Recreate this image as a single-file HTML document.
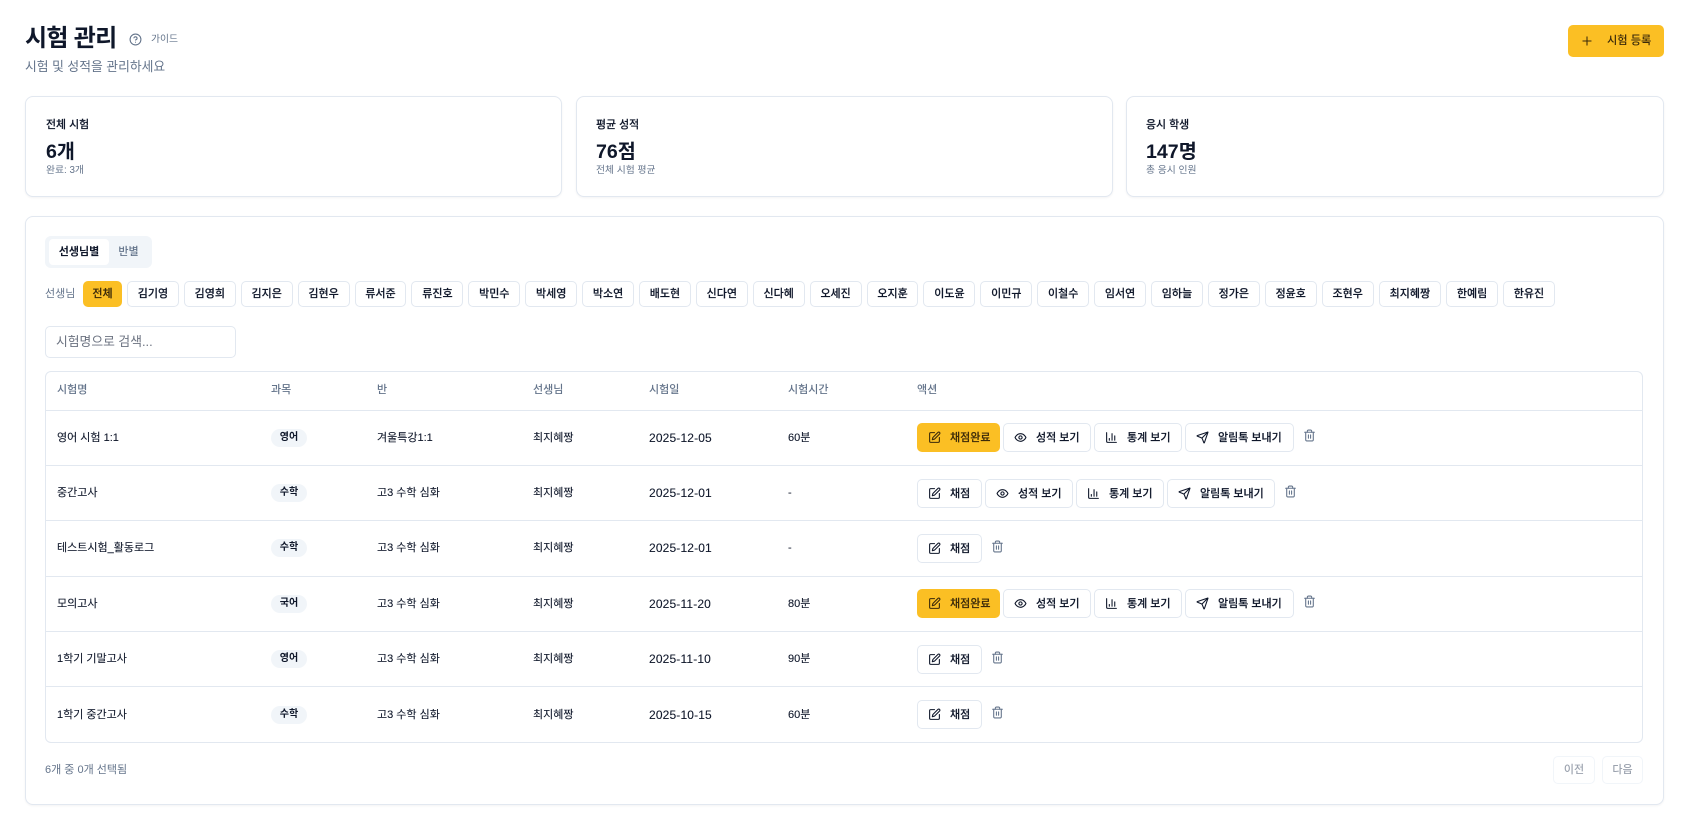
<!DOCTYPE html>
<html lang="ko">
<head>
<meta charset="utf-8">
<title>시험 관리</title>
<style>
*{box-sizing:border-box;margin:0;padding:0}
html,body{width:1692px;height:821px;overflow:hidden;background:#fff}
body{position:relative;font-family:"Liberation Sans","Noto Sans CJK KR",sans-serif;color:#0f172a;font-size:11px}
.a{position:absolute;white-space:nowrap}
.card{position:absolute;background:#fff;border:1px solid #e2e8f0;border-radius:8px;box-shadow:0 1px 2px rgba(15,23,42,.05)}
.lab{font-size:10.9px;font-weight:500;line-height:16px;color:#0f172a;-webkit-text-stroke:.15px currentColor}
.val{font-size:19.6px;font-weight:700;line-height:28px;color:#0f172a}
.sub{font-size:9.8px;line-height:14px;color:#64748b}
.chips{position:absolute;left:83px;top:281px;display:flex;gap:5px}
.chip{height:26px;width:51.9px;border:1px solid #e2e8f0;border-radius:5px;background:#fff;font-size:11px;font-weight:500;line-height:24px;text-align:center;color:#0f172a;white-space:nowrap;-webkit-text-stroke:.15px currentColor}
.chip.on{width:39px;background:#fbbf24;border-color:#fbbf24;color:#3b2a0a}
.chip.w{width:62.5px}
.th{position:absolute;top:381px;line-height:18px;font-size:11px;font-weight:500;color:#64748b;white-space:nowrap}
.line{position:absolute;left:46px;width:1596px;height:1px;background:#e2e8f0}
.td{position:absolute;font-size:11px;line-height:18px;color:#0f172a;white-space:nowrap;-webkit-text-stroke:.1px currentColor}
.d{font-size:12px;letter-spacing:.15px;margin-top:-.5px}
.pill{position:absolute;left:271px;width:36px;height:18px;border-radius:9px;background:#f1f5f9;font-size:10px;font-weight:700;line-height:18px;text-align:center;color:#0f172a}
.acts{position:absolute;left:917px;display:flex;gap:3px;align-items:flex-start}
.btn{height:29px;border:1px solid #e2e8f0;border-radius:5px;background:#fff;display:flex;align-items:center;padding-left:9.5px;gap:9.5px;font-size:11px;font-weight:500;color:#0f172a;white-space:nowrap;-webkit-text-stroke:.15px currentColor}
.btn span{position:relative;top:-1px}
.btn.y{background:#fbbf24;border-color:#fbbf24;color:#3b2a0a}
.btn svg{flex:none;-webkit-text-stroke:0}
.tr{margin-left:6px;margin-top:5.5px;color:#64748b}
svg{display:block;fill:none;stroke:currentColor;stroke-width:2;stroke-linecap:round;stroke-linejoin:round}
.s{position:absolute;border-radius:5px;border:1px solid #f1f5f9;height:28px;top:756px;font-size:11px;font-weight:500;line-height:26px;text-align:center;color:#9ca3af}
</style>
</head>
<body>
<svg width="0" height="0" style="position:absolute">
<symbol id="pen" viewBox="0 0 24 24"><path d="M12 3H5a2 2 0 0 0-2 2v14a2 2 0 0 0 2 2h14a2 2 0 0 0 2-2v-7"/><path d="M18.375 2.625a2.121 2.121 0 1 1 3 3L12 15l-4 1 1-4Z"/></symbol>
<symbol id="eye" viewBox="0 0 24 24"><path d="M2 12s3-7 10-7 10 7 10 7-3 7-10 7-10-7-10-7Z"/><circle cx="12" cy="12" r="3"/></symbol>
<symbol id="chart" viewBox="0 0 24 24"><path d="M3 3v16a2 2 0 0 0 2 2h16"/><path d="M18 17V9"/><path d="M13 17V5"/><path d="M8 17v-3"/></symbol>
<symbol id="send" viewBox="0 0 24 24"><path d="M14.536 21.686a.5.5 0 0 0 .937-.024l6.5-19a.496.496 0 0 0-.635-.635l-19 6.5a.5.5 0 0 0-.024.937l7.93 3.18a2 2 0 0 1 1.112 1.11z"/><path d="m21.854 2.147-10.94 10.939"/></symbol>
<symbol id="trash" viewBox="0 0 24 24"><path d="M3 6h18"/><path d="M19 6v14c0 1-1 2-2 2H7c-1 0-2-1-2-2V6"/><path d="M8 6V4c0-1 1-2 2-2h4c1 0 2 1 2 2v2"/><path d="M10 11v6"/><path d="M14 11v6"/></symbol>
</svg>

<div class="a" style="left:25px;top:21px;font-size:24px;font-weight:700;line-height:36px;letter-spacing:-.7px;color:#0f172a">시험 관리</div>
<svg class="a" style="left:129px;top:33px;color:#64748b;stroke-width:2" width="13" height="13" viewBox="0 0 24 24"><circle cx="12" cy="12" r="10"/><path d="M9.09 9a3 3 0 0 1 5.83 1c0 2-3 3-3 3"/><path d="M12 17h.01"/></svg>
<div class="a" style="left:151px;top:33px;font-size:9.8px;line-height:14px;color:#64748b">가이드</div>
<div class="a" style="left:25px;top:57px;font-size:12.8px;line-height:20px;color:#64748b">시험 및 성적을 관리하세요</div>

<div class="a" style="left:1568px;top:25px;width:96px;height:32px;border-radius:5px;background:#fbbf24"></div>
<svg class="a" style="left:1580px;top:34px;color:#3b2a0a;stroke-width:1.8" width="14" height="14" viewBox="0 0 24 24"><path d="M5 12h14"/><path d="M12 5v14"/></svg>
<div class="a" style="left:1607px;top:31.5px;font-size:11.2px;font-weight:500;line-height:18px;color:#3b2a0a">시험 등록</div>

<div class="card" style="left:25px;top:96px;width:537px;height:101px"></div>
<div class="card" style="left:576px;top:96px;width:537px;height:101px"></div>
<div class="card" style="left:1126px;top:96px;width:538px;height:101px"></div>
<div class="a lab" style="left:46px;top:117px">전체 시험</div>
<div class="a val" style="left:46px;top:138px">6개</div>
<div class="a sub" style="left:46px;top:164px">완료: 3개</div>
<div class="a lab" style="left:596px;top:117px">평균 성적</div>
<div class="a val" style="left:596px;top:138px">76점</div>
<div class="a sub" style="left:596px;top:164px">전체 시험 평균</div>
<div class="a lab" style="left:1146px;top:117px">응시 학생</div>
<div class="a val" style="left:1146px;top:138px">147명</div>
<div class="a sub" style="left:1146px;top:164px">총 응시 인원</div>

<div class="card" style="left:25px;top:216px;width:1639px;height:589px"></div>

<div class="a" style="left:45px;top:236px;width:107px;height:32px;border-radius:6px;background:#f1f5f9"></div>
<div class="a" style="left:49px;top:239px;width:60px;height:26px;border-radius:4px;background:#fff;font-size:11px;font-weight:700;line-height:26px;text-align:center;color:#0f172a">선생님별</div>
<div class="a" style="left:109px;top:239px;width:39px;height:26px;font-size:11px;font-weight:500;line-height:26px;text-align:center;color:#64748b">반별</div>

<div class="a" style="left:45px;top:285px;font-size:11px;line-height:18px;color:#64748b">선생님</div>
<div class="chips">
<div class="chip on">전체</div><div class="chip">김기영</div><div class="chip">김영희</div><div class="chip">김지은</div><div class="chip">김현우</div><div class="chip">류서준</div><div class="chip">류진호</div><div class="chip">박민수</div><div class="chip">박세영</div><div class="chip">박소연</div><div class="chip">배도현</div><div class="chip">신다연</div><div class="chip">신다혜</div><div class="chip">오세진</div><div class="chip">오지훈</div><div class="chip">이도윤</div><div class="chip">이민규</div><div class="chip">이철수</div><div class="chip">임서연</div><div class="chip">임하늘</div><div class="chip">정가은</div><div class="chip">정윤호</div><div class="chip">조현우</div><div class="chip w">최지혜짱</div><div class="chip">한예림</div><div class="chip">한유진</div>
</div>

<div class="a" style="left:45px;top:326px;width:191px;height:32px;border:1px solid #e2e8f0;border-radius:5px;background:#fff;padding-left:10px;font-size:12.8px;line-height:30px;color:#6b7280">시험명으로 검색...</div>

<div class="a" style="left:45px;top:371px;width:1598px;height:372px;border:1px solid #e2e8f0;border-radius:6px"></div>
<div class="th" style="left:57px">시험명</div>
<div class="th" style="left:271px">과목</div>
<div class="th" style="left:377px">반</div>
<div class="th" style="left:533px">선생님</div>
<div class="th" style="left:649px">시험일</div>
<div class="th" style="left:788px">시험시간</div>
<div class="th" style="left:917px">액션</div>

<div class="line" style="top:410px"></div>
<div class="line" style="top:465px"></div>
<div class="line" style="top:520px"></div>
<div class="line" style="top:576px"></div>
<div class="line" style="top:631px"></div>
<div class="line" style="top:686px"></div>

<!-- row 1 -->
<div class="td" style="left:57px;top:429px">영어 시험 1:1</div>
<div class="pill" style="top:429px">영어</div>
<div class="td" style="left:377px;top:429px">겨울특강1:1</div>
<div class="td" style="left:533px;top:429px">최지혜짱</div>
<div class="td d" style="left:649px;top:429px">2025-12-05</div>
<div class="td" style="left:788px;top:429px">60분</div>
<div class="acts" style="top:423px">
<div class="btn y" style="width:83px"><svg width="13" height="13"><use href="#pen"/></svg><span>채점완료</span></div>
<div class="btn" style="width:88px"><svg width="13" height="13"><use href="#eye"/></svg><span>성적 보기</span></div>
<div class="btn" style="width:88px"><svg width="13" height="13"><use href="#chart"/></svg><span>통계 보기</span></div>
<div class="btn" style="width:109px"><svg width="13" height="13"><use href="#send"/></svg><span>알림톡 보내기</span></div>
<svg class="tr" width="13" height="13"><use href="#trash"/></svg>
</div>

<!-- row 2 -->
<div class="td" style="left:57px;top:484px">중간고사</div>
<div class="pill" style="top:484px">수학</div>
<div class="td" style="left:377px;top:484px">고3 수학 심화</div>
<div class="td" style="left:533px;top:484px">최지혜짱</div>
<div class="td d" style="left:649px;top:484px">2025-12-01</div>
<div class="td" style="left:788px;top:484px">-</div>
<div class="acts" style="top:479px">
<div class="btn" style="width:65px"><svg width="13" height="13"><use href="#pen"/></svg><span>채점</span></div>
<div class="btn" style="width:88px"><svg width="13" height="13"><use href="#eye"/></svg><span>성적 보기</span></div>
<div class="btn" style="width:88px"><svg width="13" height="13"><use href="#chart"/></svg><span>통계 보기</span></div>
<div class="btn" style="width:108px"><svg width="13" height="13"><use href="#send"/></svg><span>알림톡 보내기</span></div>
<svg class="tr" width="13" height="13"><use href="#trash"/></svg>
</div>

<!-- row 3 -->
<div class="td" style="left:57px;top:539px">테스트시험_활동로그</div>
<div class="pill" style="top:539px">수학</div>
<div class="td" style="left:377px;top:539px">고3 수학 심화</div>
<div class="td" style="left:533px;top:539px">최지혜짱</div>
<div class="td d" style="left:649px;top:539px">2025-12-01</div>
<div class="td" style="left:788px;top:539px">-</div>
<div class="acts" style="top:534px">
<div class="btn" style="width:65px"><svg width="13" height="13"><use href="#pen"/></svg><span>채점</span></div>
<svg class="tr" width="13" height="13"><use href="#trash"/></svg>
</div>

<!-- row 4 -->
<div class="td" style="left:57px;top:595px">모의고사</div>
<div class="pill" style="top:595px">국어</div>
<div class="td" style="left:377px;top:595px">고3 수학 심화</div>
<div class="td" style="left:533px;top:595px">최지혜짱</div>
<div class="td d" style="left:649px;top:595px">2025-11-20</div>
<div class="td" style="left:788px;top:595px">80분</div>
<div class="acts" style="top:589px">
<div class="btn y" style="width:83px"><svg width="13" height="13"><use href="#pen"/></svg><span>채점완료</span></div>
<div class="btn" style="width:88px"><svg width="13" height="13"><use href="#eye"/></svg><span>성적 보기</span></div>
<div class="btn" style="width:88px"><svg width="13" height="13"><use href="#chart"/></svg><span>통계 보기</span></div>
<div class="btn" style="width:109px"><svg width="13" height="13"><use href="#send"/></svg><span>알림톡 보내기</span></div>
<svg class="tr" width="13" height="13"><use href="#trash"/></svg>
</div>

<!-- row 5 -->
<div class="td" style="left:57px;top:650px">1학기 기말고사</div>
<div class="pill" style="top:650px">영어</div>
<div class="td" style="left:377px;top:650px">고3 수학 심화</div>
<div class="td" style="left:533px;top:650px">최지혜짱</div>
<div class="td d" style="left:649px;top:650px">2025-11-10</div>
<div class="td" style="left:788px;top:650px">90분</div>
<div class="acts" style="top:645px">
<div class="btn" style="width:65px"><svg width="13" height="13"><use href="#pen"/></svg><span>채점</span></div>
<svg class="tr" width="13" height="13"><use href="#trash"/></svg>
</div>

<!-- row 6 -->
<div class="td" style="left:57px;top:706px">1학기 중간고사</div>
<div class="pill" style="top:706px">수학</div>
<div class="td" style="left:377px;top:706px">고3 수학 심화</div>
<div class="td" style="left:533px;top:706px">최지혜짱</div>
<div class="td d" style="left:649px;top:706px">2025-10-15</div>
<div class="td" style="left:788px;top:706px">60분</div>
<div class="acts" style="top:700px">
<div class="btn" style="width:65px"><svg width="13" height="13"><use href="#pen"/></svg><span>채점</span></div>
<svg class="tr" width="13" height="13"><use href="#trash"/></svg>
</div>

<div class="a" style="left:45px;top:761px;font-size:11px;line-height:18px;color:#64748b">6개 중 0개 선택됨</div>
<div class="s" style="left:1553px;width:42px">이전</div>
<div class="s" style="left:1602px;width:41px">다음</div>
</body>
</html>
